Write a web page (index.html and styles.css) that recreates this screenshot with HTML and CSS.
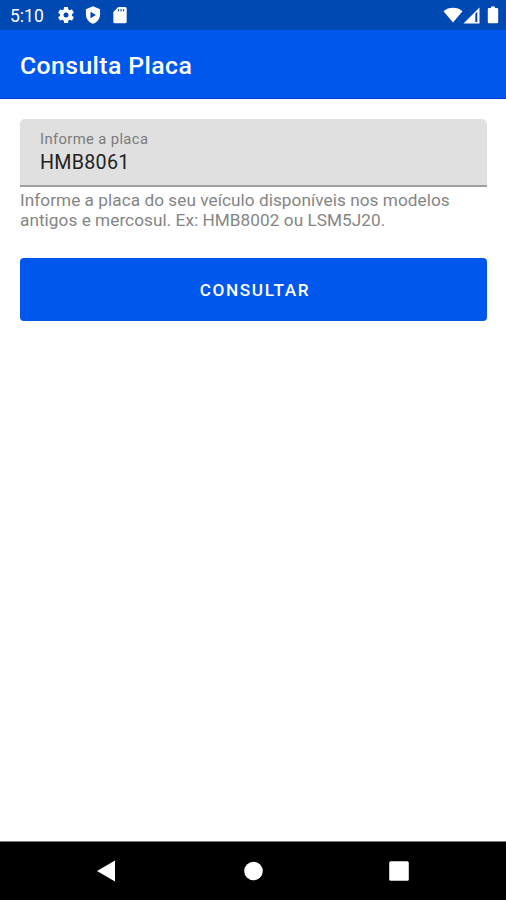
FILE: index.html
```html
<!DOCTYPE html>
<html lang="pt-BR">
<head>
    <meta charset="UTF-8">
    <meta name="viewport" content="width=device-width, initial-scale=1.0">
    <title>Consulta Placa</title>
    <link rel="stylesheet" href="styles.css">
</head>
<body>
    <div class="status-bar">
        <span class="clock">5:10</span>
        <svg class="gear" width="20" height="20" viewBox="0 0 24 24"><path fill="#fff" fill-rule="evenodd" d="M19.14 12.94a7 7 0 0 0 0-1.88l2.03-1.58a.5.5 0 0 0 .12-.61l-1.92-3.32a.5.5 0 0 0-.59-.22l-2.39.96a7 7 0 0 0-1.62-.94l-.36-2.54a.5.5 0 0 0-.48-.41h-3.84a.5.5 0 0 0-.47.41l-.36 2.54a7 7 0 0 0-1.62.94l-2.39-.96a.5.5 0 0 0-.59.22L2.74 8.87a.5.5 0 0 0 .12.61l2.03 1.58a7 7 0 0 0 0 1.88l-2.03 1.58a.5.5 0 0 0-.12.61l1.92 3.32c.12.22.37.29.59.22l2.39-.96c.5.38 1.03.7 1.62.94l.36 2.54c.05.24.24.41.48.41h3.84c.24 0 .44-.17.47-.41l.36-2.54a7 7 0 0 0 1.62-.94l2.39.96c.22.08.47 0 .59-.22l1.92-3.32a.5.5 0 0 0-.12-.61zM12 15a3 3 0 1 1 0-6 3 3 0 0 1 0 6z"/></svg>
        <svg class="shield" width="20" height="20" viewBox="0 0 24 24"><path fill="#fff" fill-rule="evenodd" d="M12 1.500 3.500 5V11c0 5.300 3.600 10.200 8.500 11.500 4.900-1.300 8.500-6.200 8.500-11.500V5zM9 8 15.500 12 9 16z"/></svg>
        <svg class="sd-card" width="20" height="20" viewBox="0 0 24 24"><path fill="#fff" fill-rule="evenodd" d="M18 2.500H10L4 8.500v11.500a2 2 0 0 0 2 2h12a2 2 0 0 0 2-2V4.500a2 2 0 0 0-2-2zM9.500 5H11v2.500H9.500zM12.500 5H14v2.500h-1.500zM15.500 5H17v2.500h-1.500z"/></svg>
        <svg class="wifi" width="20" height="16" viewBox="0 0 20 16"><path fill="#fff" d="M.5 4.200C5.500-.4 14.500-.4 19.500 4.200L10 15.500z"/></svg>
        <svg class="signal" width="17" height="17" viewBox="0 0 17 17"><path fill="#fff" fill-rule="evenodd" d="M16.500.5v16H.5zM12.300 6.800v8.200h2V4.800z"/></svg>
        <svg class="battery" width="12" height="18" viewBox="0 0 12 18"><path fill="#fff" d="M4 .5h4v1.500h2a1.200 1.200 0 0 1 1.200 1.200V16a1.200 1.200 0 0 1-1.200 1.200H2A1.200 1.200 0 0 1 .8 16V3.200A1.200 1.200 0 0 1 2 2h2z"/></svg>
    </div>
    <header>
        <h1>Consulta Placa</h1>
    </header>
    <main>
        <div class="field">
            <label for="placa">Informe a placa</label>
            <input type="text" id="placa" name="placa" value="HMB8061">
        </div>
        <p class="helper">Informe a placa do seu veículo disponíveis nos modelos antigos e mercosul. Ex: HMB8002 ou LSM5J20.</p>
        <button type="button">CONSULTAR</button>
    </main>
    <nav>
        <svg width="22" height="22" viewBox="0 0 22 22"><path fill="#fff" d="M19 .5v21L1 11z"/></svg>
        <svg width="22" height="22" viewBox="0 0 22 22"><circle fill="#fff" cx="11.500" cy="11" r="9.300"/></svg>
        <svg width="22" height="22" viewBox="0 0 22 22"><rect fill="#fff" x="1.200" y="1.200" width="19.600" height="19.600" rx="1.500"/></svg>
    </nav>
</body>
</html>
```

FILE: styles.css
```css
body {
    font-family: Roboto, sans-serif;
    margin: 0;
    height: 900px;
    display: flex;
    flex-direction: column;
    background-color: #fff;
}

.status-bar {
    height: 30px;
    box-sizing: border-box;
    padding: 0 7px 0 10px;
    display: flex;
    align-items: center;
    background-color: #0048b2;
    color: #fff;
}

.clock {
    width: 46px;
    font-size: 17.5px;
    line-height: 30px;
    padding-top: 2px;
}

.gear,
.shield {
    margin-right: 7px;
}

.wifi {
    margin-left: auto;
}

.battery {
    margin-left: 7px;
}

header {
    height: 69px;
    box-sizing: border-box;
    padding: 2px 20px 0;
    display: flex;
    align-items: center;
    background-color: #0057ee;
    border-bottom: 1px solid #0040c8;
    color: #fff;
}

h1 {
    margin: 0;
    font-size: 24.8px;
    font-weight: 500;
    letter-spacing: 0.4px;
}

main {
    flex: 1;
    padding: 20px 19px 0 20px;
}

.field {
    height: 68px;
    box-sizing: border-box;
    padding: 11px 20px 0;
    background-color: #e0e0e0;
    border-bottom: 2px solid #a0a0a0;
    border-radius: 5px 5px 0 0;
}

label {
    display: block;
    font-size: 14.8px;
    line-height: 18px;
    letter-spacing: 0.37px;
    color: #7b7b7b;
}

input {
    display: block;
    width: 100%;
    margin-top: 1px;
    padding: 0;
    border: none;
    outline: none;
    background: none;
    font-family: inherit;
    font-size: 19.7px;
    line-height: 28px;
    height: 28px;
    letter-spacing: 0.25px;
    color: #222;
}

.helper {
    margin: 3px 0 28px;
    font-size: 17.2px;
    line-height: 20px;
    letter-spacing: 0.05px;
    color: #858585;
}

button {
    display: block;
    width: 100%;
    height: 63px;
    padding: 1px 0 0 3px;
    border: none;
    border-radius: 4px;
    background-color: #0057ee;
    color: #fff;
    font-family: inherit;
    font-size: 17.2px;
    font-weight: 500;
    letter-spacing: 1.6px;
}

nav {
    height: 59px;
    box-sizing: border-box;
    padding: 0 96px;
    display: flex;
    align-items: center;
    justify-content: space-between;
    background-color: #000;
    border-top: 1px solid #777;
}
```
